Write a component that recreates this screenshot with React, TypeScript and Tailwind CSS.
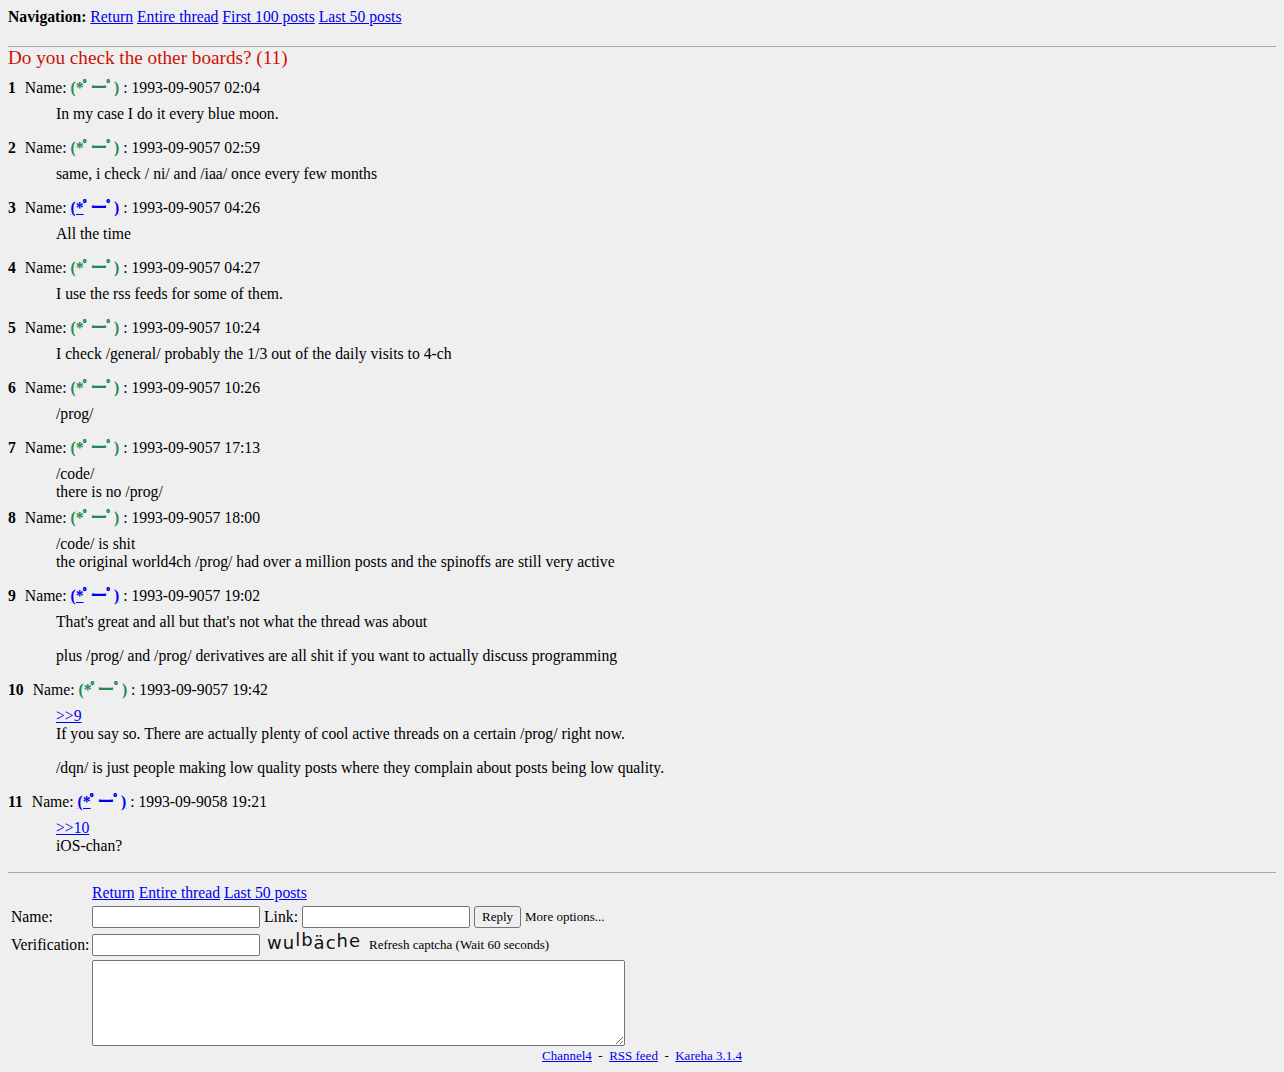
import React from 'react'

type Post = {
  num: number
  link?: boolean
  date: string
  paras: React.ReactNode[][]
  tight?: boolean
}

const A = ({ children }: { children: React.ReactNode }) => (
  <a href="#" className="text-[#0000ee] underline">{children}</a>
)

const posts: Post[] = [
  { num: 1, date: '1993-09-9057 02:04', paras: [['In my case I do it every blue moon.']] },
  { num: 2, date: '1993-09-9057 02:59', paras: [['same, i check / ni/ and /iaa/ once every few months']] },
  { num: 3, link: true, date: '1993-09-9057 04:26', paras: [['All the time']] },
  { num: 4, date: '1993-09-9057 04:27', paras: [['I use the rss feeds for some of them.']] },
  { num: 5, date: '1993-09-9057 10:24', paras: [['I check /general/ probably the 1/3 out of the daily visits to 4-ch']] },
  { num: 6, date: '1993-09-9057 10:26', paras: [['/prog/']] },
  { num: 7, date: '1993-09-9057 17:13', paras: [['/code/', 'there is no /prog/']], tight: true },
  {
    num: 8,
    date: '1993-09-9057 18:00',
    paras: [['/code/ is shit', 'the original world4ch /prog/ had over a million posts and the spinoffs are still very active']],
  },
  {
    num: 9,
    link: true,
    date: '1993-09-9057 19:02',
    paras: [
      ["That's great and all but that's not what the thread was about"],
      ['plus /prog/ and /prog/ derivatives are all shit if you want to actually discuss programming'],
    ],
  },
  {
    num: 10,
    date: '1993-09-9057 19:42',
    paras: [
      [<A key="q">&gt;&gt;9</A>, 'If you say so. There are actually plenty of cool active threads on a certain /prog/ right now.'],
      ['/dqn/ is just people making low quality posts where they complain about posts being low quality.'],
    ],
  },
  {
    num: 11,
    link: true,
    date: '1993-09-9058 19:21',
    paras: [[<A key="q">&gt;&gt;10</A>, 'iOS-chan?']],
  },
]

// the poster name, a kaomoji in bold
const Kao = ({ link }: { link?: boolean }) => {
  const face = (
    <span className="font-bold">
      (*<span className="inline-block -ml-[1px] font-black [text-shadow:0_0_0.6px_currentColor]">ﾟ</span>
      <span className="inline-block scale-x-110">ー</span>
      <span className="inline-block font-black [text-shadow:0_0_0.6px_currentColor]">ﾟ</span>)
    </span>
  )
  return link ? <a href="#" className="text-[#0000ee] underline">{face}</a> : <span className="text-[#228854]">{face}</span>
}

export default function App() {
  return (
    <div
      className="min-h-[1072px] bg-[#efefef] text-black px-2 pt-2 pb-2 text-[15.7px] leading-[18px]"
      style={{ fontFamily: '"Liberation Serif", "Noto Sans CJK JP", serif' }}
    >
      <div>
        <b>Navigation:</b> <A>Return</A> <A>Entire thread</A> <A>First 100 posts</A> <A>Last 50 posts</A>
      </div>
      <hr className="mt-[20px] border-[#aaaaaa]" />
      <h2 className="text-[19.2px] leading-[20px] text-[#cc1105] mt-[1px]">Do you check the other boards? (11)</h2>

      <div className="mt-[11px]">
        {posts.map(p => (
          <div key={p.num} className={p.tight ? 'mb-[8px]' : 'mb-[16px]'}>
            <div className="flex whitespace-pre">
              <b className="mr-[9px]">{p.num}</b>
              <span>Name: </span>
              <Kao link={p.link} />
              <span> : {p.date}</span>
            </div>
            <div className="ml-[48px] mt-[8px] flex flex-col gap-[16px]">
              {p.paras.map((lines, i) => (
                <div key={i} className="flex flex-col items-start">
                  {lines.map((l, j) => (
                    <div key={j}>{l}</div>
                  ))}
                </div>
              ))}
            </div>
          </div>
        ))}
      </div>

      <hr className="mt-[17px] border-[#aaaaaa]" />

      <div className="mt-[11px] flex">
        <div className="w-[84px] shrink-0 pl-[3px] flex flex-col">
          <div className="h-[18px]" />
          <div className="h-[24px] mt-[3px] flex items-center">Name:</div>
          <div className="h-[24px] mt-[4px] flex items-center">Verification:</div>
        </div>
        <div className="flex flex-col">
          <div>
            <A>Return</A> <A>Entire thread</A> <A>Last 50 posts</A>
          </div>
          <div className="mt-[4px] flex items-center h-[22px]">
            <input className="w-[168px] h-[22px] bg-white border border-[#767676] rounded-[2px]" />
            <span className="ml-[4px]">Link:</span>
            <input className="ml-[4px] w-[168px] h-[22px] bg-white border border-[#767676] rounded-[2px]" />
            <button className="ml-[4px] h-[22px] px-[7px] text-[13px] bg-[#efefef] border border-[#767676] rounded-[3px]">
              Reply
            </button>
            <span className="ml-[4px] text-[13px]">More options...</span>
          </div>
          <div className="mt-[6px] flex items-center h-[22px]">
            <input className="w-[168px] h-[22px] bg-white border border-[#767676] rounded-[2px]" />
            <span
              className="ml-[7px] w-[98px] h-[22px] flex items-end pb-[5px] text-[18px] leading-[17px] tracking-[1px] text-[#111]"
              style={{ fontFamily: '"DejaVu Sans", sans-serif' }}
            >
              <span>w</span>
              <span>u</span>
              <span className="-translate-y-[3px]">l</span>
              <span className="-translate-y-[3px]">b</span>
              <span>ä</span>
              <span>c</span>
              <span className="-translate-y-[2px]">h</span>
              <span className="-translate-y-[2px]">e</span>
            </span>
            <span className="ml-[4px] text-[13px]">Refresh captcha (Wait 60 seconds)</span>
          </div>
          <textarea className="mt-[4px] w-[533px] h-[86px] bg-white border border-[#767676] rounded-[2px]" />
        </div>
      </div>

      <div className="text-center text-[13px] leading-[15px] mt-[2px]">
        <A>Channel4</A>&nbsp; - &nbsp;<A>RSS feed</A>&nbsp; - &nbsp;<A>Kareha 3.1.4</A>
      </div>
    </div>
  )
}
